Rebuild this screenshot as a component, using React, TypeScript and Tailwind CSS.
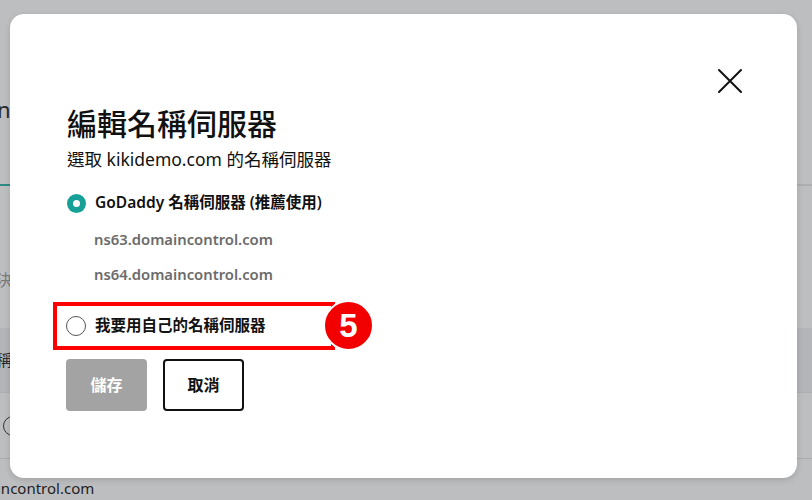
import React from 'react';

const font = { fontFamily: '"Noto Sans", "Noto Sans CJK TC", sans-serif' };

const CloseIcon: React.FC = () => (
  <svg className="h-[26px] w-[26px]" viewBox="0 0 26 26" fill="none" stroke="#111" strokeWidth="2" strokeLinecap="round">
    <path d="M2 2l22 22M24 2L2 24" />
  </svg>
);

export default function App() {
  return (
    <div className="relative h-[500px] w-[812px] overflow-hidden bg-[#bdbec0]" style={font}>
      {/* page behind the dimmed overlay */}
      <div className="flex flex-col">
        <div className="h-[97px]" />
        <div className="ml-[-3px] h-[24px] text-[22px] leading-[24px] text-[#2a2a2a]">n</div>
        <div className="h-[63px]" />
        <div className="h-[2px] w-full bg-[#acaeb0]">
          <div className="h-[2px] w-[60px] bg-[#2f8a84]" />
        </div>
        <div className="h-[84px]" />
        <div className="ml-[-4px] h-[20px] text-[16px] leading-[20px] text-[#7a7a7a]">決</div>
        <div className="h-[38px]" />
        <div className="flex h-[64px] items-center bg-[#b3b5b8] text-[16px] text-[#2a2a2a]">
          <span className="ml-[-4px]">稱</span>
        </div>
        <div className="h-[1px] bg-[#acaeb0]" />
        <div className="flex h-[65px] items-center">
          <span className="ml-[3px] h-[20px] w-[20px] rounded-full border border-[#333]" />
        </div>
        <div className="h-[1px] bg-[#a9abad]" />
        <div className="pt-[20px] text-[15px] leading-[18px] text-[#222]">
          <span className="ml-[-3px]">incontrol.com</span>
        </div>
      </div>

      {/* modal */}
      <div className="absolute left-[10px] top-[14px] h-[464px] w-[787px] rounded-[14px] bg-white shadow-[0_2px_6px_rgba(0,0,0,0.15)]">
        <div className="flex justify-end pr-[54px] pt-[54px]">
          <CloseIcon />
        </div>
        <div className="pl-[57px]">
          <h1 className="mt-[12px] text-[30px] font-medium leading-[36px] text-[#111]">編輯名稱伺服器</h1>
          <p className="mt-[5px] text-[17.5px] leading-[24px] text-[#111]">選取 kikidemo.com 的名稱伺服器</p>

          <div className="mt-[20px] flex h-[24px] items-center gap-[9px]">
            <span className="flex h-[19px] w-[19px] items-center justify-center rounded-full bg-[#16a098]">
              <span className="h-[7px] w-[7px] rounded-full bg-white" />
            </span>
            <span className="text-[15.5px] font-semibold text-[#111]">GoDaddy 名稱伺服器 (推薦使用)</span>
          </div>
          <div className="mt-[14px] pl-[27px] text-[14.8px] font-semibold leading-[20px] text-[#6b6b6b]">ns63.domaincontrol.com</div>
          <div className="mt-[15px] pl-[27px] text-[14.8px] font-semibold leading-[20px] text-[#6b6b6b]">ns64.domaincontrol.com</div>

          <div className="relative ml-[-14px] mt-[18px] flex h-[48px] w-[282px] items-center gap-[9px] border-4 border-[#ff0000] pl-[9px]">
            <span className="h-[20px] w-[20px] rounded-full border border-[#555]" />
            <span className="text-[15.5px] font-semibold text-[#111]">我要用自己的名稱伺服器</span>
            <span
              className="absolute left-[266px] top-[-6px] flex h-[51px] w-[51px] items-center justify-center rounded-full border-[2px] border-white bg-[#f20000] text-[33px] font-black leading-none text-white"
              style={{ fontFamily: '"Liberation Sans", Arial, sans-serif' }}
            >
              5
            </span>
          </div>

          <div className="mt-[9px] flex gap-[16px]">
            <button className="ml-[-1px] h-[52px] w-[81px] rounded-[4px] bg-[#a3a3a3] text-[16px] font-semibold text-white">儲存</button>
            <button className="h-[52px] w-[81px] rounded-[4px] border-2 border-[#111] bg-white text-[16px] font-semibold text-[#111]">取消</button>
          </div>
        </div>
      </div>
    </div>
  );
}
